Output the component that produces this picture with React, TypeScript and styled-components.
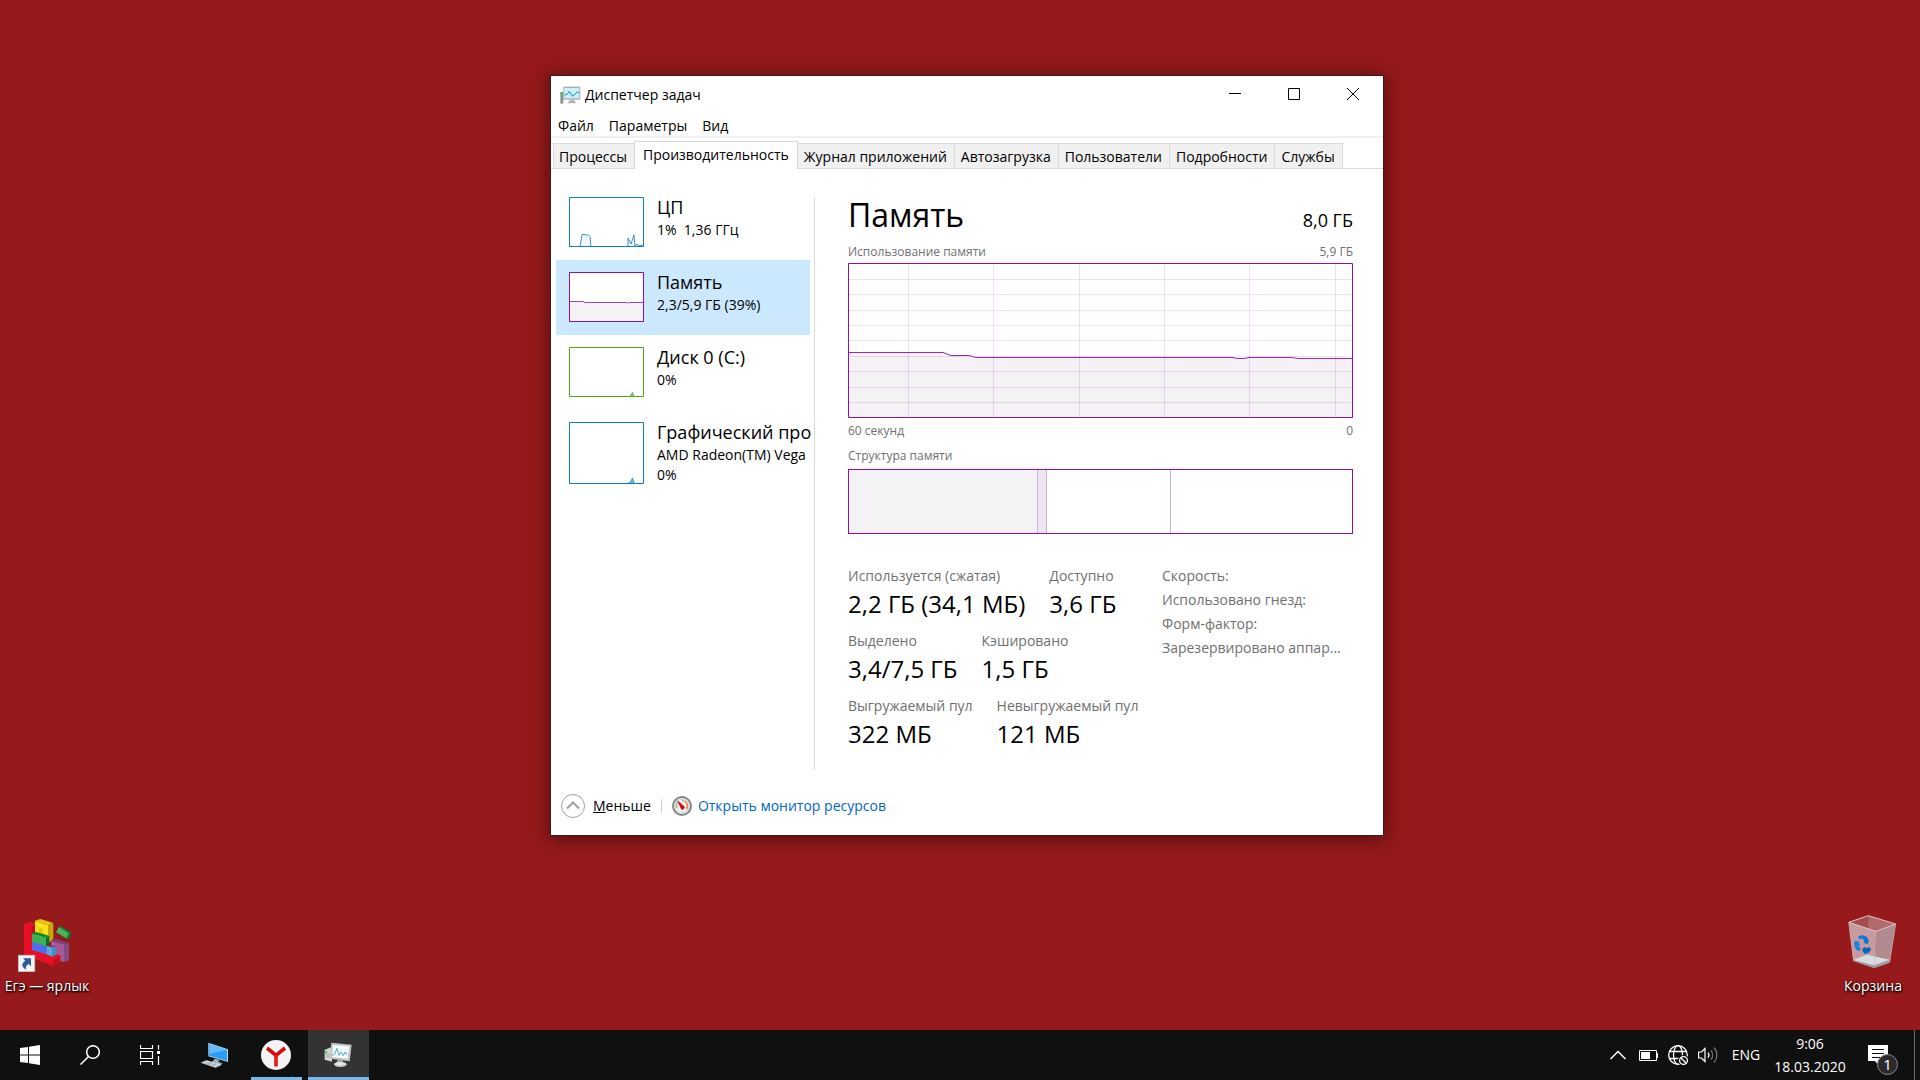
import React from "react";
import styled, { createGlobalStyle, css } from "styled-components";

const GlobalStyle = createGlobalStyle`
  * { box-sizing: border-box; }
  body { margin: 0; }
  body, button { font-family: "Open Sans", "Noto Sans", sans-serif; font-size: 14px; line-height: 20px; }
  button { margin: 0; padding: 0; border: 0; background: none; color: inherit; text-align: left; }
  h1, p, dl, dt, dd, ul { margin: 0; padding: 0; font-weight: 400; }
  svg { display: block; flex: none; }
`;

/* ---------- Desktop ---------- */

const Screen = styled.div`
  display: flex;
  flex-direction: column;
  min-height: 100vh;
  background: #96191b;
  color: #000;
`;

const Workspace = styled.main`
  position: relative;
  flex: 1;
  overflow: hidden;
`;

const Shortcut = styled.button<{ $side: "left" | "right" }>`
  position: absolute;
  bottom: 34px;
  ${(p) => p.$side}: 0;
  width: 94px;
  display: flex;
  flex-direction: column;
  align-items: center;
  gap: 4px;
  color: #fff;
  white-space: nowrap;
  text-shadow: 1px 1px 2px #000, 0 1px 2px #000;
`;

/* ---------- Window ---------- */

const Window = styled.section`
  position: absolute;
  left: 550px;
  top: 75px;
  width: 834px;
  background: #fff;
  border: 1px solid #3c1a1a;
  box-shadow: 0 2px 18px 2px rgba(0, 0, 0, 0.42);
`;

const TitleBar = styled.header`
  display: flex;
  height: 38px;
  align-items: center;
  padding-left: 9px;
  gap: 4px;
`;

const Title = styled.h1`
  flex: 1;
  font-size: 14px;
  line-height: 20px;
`;

const CaptionButtons = styled.div`
  display: flex;
  align-self: flex-start;
  padding-right: 1px;
`;

const CaptionButton = styled.button`
  width: 59px;
  height: 36px;
  display: grid;
  place-items: center;
`;

const MenuBar = styled.nav`
  display: flex;
  gap: 15px;
  padding: 2px 7px 0;
  height: 24px;
  border-bottom: 2px solid #f0f0f0;
`;

const TabStrip = styled.div`
  display: flex;
  align-items: flex-end;
  height: 31px;
  padding-left: 2px;
  border-bottom: 1px solid #d9d9d9;
`;

const Tab = styled.button<{ $active?: boolean }>`
  height: 25px;
  padding: 2px 7px 0 6px;
  border: 1px solid #d9d9d9;
  border-width: 1px 1px 0 0;
  background: #f0f0f0;
  white-space: nowrap;
  &:first-child { padding-left: 5px; border-left-width: 1px; }
  ${(p) =>
    p.$active &&
    css`
      height: 28px;
      margin: 0 0 -1px -1px;
      padding: 0 8px 2px;
      border-left-width: 1px;
      background: #fff;
    `}
`;

const Body = styled.div`
  display: grid;
  grid-template-columns: 263px 1px 1fr;
`;

const Sidebar = styled.div`
  padding: 16px 4px 0 5px;
  overflow: hidden;
`;

const Divider = styled.div`
  margin-top: 28px;
  background: #d9d9d9;
`;

const Resource = styled.button<{ $selected?: boolean }>`
  display: grid;
  grid-template-columns: 75px 1fr;
  column-gap: 13px;
  align-items: start;
  width: 100%;
  min-height: 75px;
  padding-left: 13px;
  background: ${(p) => (p.$selected ? "#cce8ff" : "transparent")};
  white-space: pre;
  & > svg { margin-top: 12px; }
`;

const ResourceText = styled.span`
  display: flex;
  flex-direction: column;
  padding-top: 9px;
  min-width: 0;
`;

const ResourceName = styled.span`
  font-size: 18px;
  line-height: 26px;
`;

const Details = styled.div`
  display: flex;
  flex-direction: column;
  padding: 22px 30px 20px 33px;
`;

const DetailsHeader = styled.div`
  display: flex;
  justify-content: space-between;
  align-items: baseline;
  font-size: 18px;
`;

const Heading = styled.h1`
  font-size: 32px;
  line-height: 48px;
`;

const Caption = styled.div`
  display: flex;
  justify-content: space-between;
  padding-top: 5px;
  font-size: 12px;
  color: #707070;
`;

const UsageFigure = styled.div`
  margin-top: -2px;
`;

const Chart = styled.svg`
  width: 100%;
  height: 155px;
  margin: 1px 0 -2px;
`;

const Composition = styled.div`
  display: flex;
  height: 65px;
  margin: 3px 0 32px;
  border: 1px solid #8b12ae;
`;

const Segment = styled.div<{ $share: number; $fill: string }>`
  flex: ${(p) => p.$share} 1 0;
  background: ${(p) => p.$fill};
  &:not(:last-child) { border-right: 1px solid #cfaed9; }
`;

const Facts = styled.div`
  display: flex;
  align-items: flex-start;
`;

const Stats = styled.div`
  display: flex;
  flex-direction: column;
  gap: 11px;
  width: 314px;
`;

const StatRow = styled.dl`
  display: flex;
  gap: 24px;
  white-space: nowrap;
`;

const StatLabel = styled.dt`
  color: #707070;
`;

const StatValue = styled.dd`
  padding-top: 2px;
  font-size: 24px;
  line-height: 32px;
`;

const Hardware = styled.ul`
  flex: 1;
  min-width: 0;
  list-style: none;
  margin-top: -2px;
  color: #707070;
  line-height: 24px;
  white-space: nowrap;
`;

const Footer = styled.footer`
  display: flex;
  align-items: center;
  height: 65px;
  padding: 6px 10px 0;
`;

const FewerButton = styled.button`
  display: flex;
  align-items: center;
  gap: 8px;
  padding-right: 10px;
`;

const FooterLink = styled.a`
  display: flex;
  align-items: center;
  gap: 6px;
  padding-left: 10px;
  color: #0066cc;
  text-decoration: none;
`;

const FooterRule = styled.span`
  width: 1px;
  height: 14px;
  background: #d0d0d0;
`;

/* ---------- Taskbar ---------- */

const Taskbar = styled.footer`
  display: flex;
  height: 50px;
  background: #101010;
  color: #fff;
`;

const SystemButton = styled.button`
  width: 60px;
  display: grid;
  place-items: center;
`;

const Apps = styled.div`
  display: flex;
  gap: 1px;
  flex: 1;
  padding-left: 4px;
`;

const AppButton = styled.button<{ $state?: "open" | "focused" }>`
  width: 61px;
  display: grid;
  grid-template-rows: 1fr 3px;
  place-items: center;
  padding-top: 3px;
  background: ${(p) => (p.$state === "focused" ? "#333" : "transparent")};
  & > svg { margin-right: 2px; }
  &::after {
    content: "";
    width: ${(p) => (p.$state === "focused" ? "61px" : "51px")};
    height: 3px;
    background: ${(p) => (p.$state ? "#76b9ed" : "transparent")};
  }
`;

const Tray = styled.div`
  display: flex;
  align-items: center;
`;

const TrayButton = styled.button<{ $width: number }>`
  width: ${(p) => p.$width}px;
  height: 50px;
  display: grid;
  place-items: center;
`;

const Clock = styled.button`
  width: 82px;
  text-align: center;
  line-height: 23px;
`;

const ShowDesktop = styled.button`
  width: 6px;
  height: 50px;
  border-left: 1px solid #6c6c6c;
`;

/* ---------- Drawings ---------- */

const ManagerIcon = () => (
  <svg width="21" height="18" viewBox="44 46 63 54">
    <path d="M45 64h9v35h-9z" fill="#8b9292" />
    <path d="M46 66h6v6h-6z" fill="#35d23a" />
    <path d="M54 48h51v39H54z" fill="#a9adad" />
    <path d="M57 52h45v31H57z" fill="#c8f0ff" />
    <path d="M58 73l6-1 8-10 10 15 14-13 6 3" fill="none" stroke="#1688bd" strokeWidth="3" />
    <path d="M74 87h12l7 11H66z" fill="#b7b7b7" />
  </svg>
);

const EgeIcon = () => (
  <svg width="59" height="55" viewBox="51 51 177 165">
    <path d="M69 72l23-6 22 5v80l64 18v17l-21 11-88-32z" fill="#e81123" />
    <path d="M92 78l22-7v30H92zM157 180l21-10v16l-21 11z" fill="#c00f20" />
    <path d="M102 62l39 14v54l-39-20z" fill="#fbe11e" />
    <path d="M102 62l16-5 39 12-16 7z" fill="#e6c60c" />
    <path d="M141 76l16-7v48l-16 13z" fill="#c7a80a" />
    <path d="M113 82l12 4v22l-12-4z" fill="#e3c70c" />
    <path d="M150 122l39 11v53l-11-3v-16l-13-4v-22l-15-4z" fill="#a55a98" />
    <path d="M150 122l15-5 39 12-15 5z" fill="#7d4079" />
    <path d="M189 134l15-5v52l-15 5z" fill="#844a86" />
    <path d="M93 125l44 13v25l-44-13z" fill="#4f6df0" />
    <path d="M137 138l9 3 19-1v24l-12 6-16-7z" fill="#3f8dc6" />
    <path d="M137 138l16 4v27l-16-6z" fill="#59a9dc" />
    <path d="M93 101l42 12v25l-42-12z" fill="#3fae55" />
    <path d="M93 101l9-6 43 12-10 6z" fill="#0b8a36" />
    <path d="M135 113l10-6v25l-10 6z" fill="#057029" />
    <path d="M178 77l33 22-9 21-37-23z" fill="#0c7d34" />
    <path d="M173 81l30 19-7 15-30-18z" fill="#4bb35f" />
    <path d="M52 166h49v49H52z" fill="#f4f4f4" stroke="#c3c3c3" strokeWidth="3" />
    <path d="M66 175h24v24l-7-7c-8 5-10 10-7 17-15-8-16-19-3-27z" fill="#2d5c9e" />
  </svg>
);

const BinIcon = () => (
  <svg width="50" height="57" viewBox="774 45 150 171">
    <path d="M776 67l59-20 82 25-59 22z" fill="#b26a6d" />
    <path d="M776 67l59-20v38l-40 14z" fill="#a34d50" />
    <path d="M776 67l82 27-5 110-63-22z" fill="#c69a9e" />
    <path d="M858 94l59-22-18 116-46 16z" fill="#b08a8f" />
    <path d="M790 180l40-16 70 15-47 17z" fill="#d6dde0" />
    <path d="M790 180l63 17 46-18v9l-46 16-62-20z" fill="#9ba0a3" />
    <path d="M776 67l59-20 82 25-59 22z" fill="none" stroke="#e3c3c6" strokeWidth="3" />
    <path d="M776 67l15 116M917 72l-18 114M857 94l-4 100" fill="none" stroke="#d5b3b6" strokeWidth="2" />
    <path d="M804 110l12-5 14 5 7 12-4 10-13-4 3-6-8-8-5 5z" fill="#0a78d4" />
    <path d="M793 122l13 2 4 10-5 3 7 7-2 9-10-2-7-13z" fill="#1487e0" />
    <path d="M816 150l7-10 3 4 14-2 3 8-9 10-11 1z" fill="#0667bf" />
  </svg>
);

const GaugeIcon = () => (
  <svg width="20" height="20" viewBox="0 0 20 20">
    <circle cx="10" cy="10" r="9" fill="#f3f1ee" stroke="#7f8788" strokeWidth="2" />
    <circle cx="10" cy="10" r="7" fill="none" stroke="#cfcfca" />
    <path d="M5 12a5.500 5.500 0 0 1 1-6M10 4.500a5.500 5.500 0 0 1 3 1" fill="none" stroke="#b8b8b0" strokeWidth="1.500" />
    <path d="M13 5.500a5.500 5.500 0 0 1 1.500 7.500" fill="none" stroke="#f07a3a" strokeWidth="1.500" />
    <path d="M5 4l8 7-2 3-2-1z" fill="#cf0f16" />
  </svg>
);

const ComputerIcon = () => (
  <svg width="28" height="26" viewBox="600 427 84 78">
    <path d="M625 429l59 20v38l-59-17z" fill="#b8dcf0" />
    <path d="M627 432l54 19v33l-54-16z" fill="#2f9df4" />
    <path d="M627 432l54 19-54 12z" fill="#62bbff" />
    <path d="M645 477l14 4-4 6 14 4-16 4-18-7z" fill="#9fb0ba" />
    <path d="M602 489l17-7 47 13-19 9z" fill="#dfe8ed" />
    <path d="M608 489l43 12M614 486l44 12M618 496l17-9M632 500l16-9" stroke="#8a99a3" strokeWidth="2" />
  </svg>
);

const YandexIcon = () => (
  <svg width="30" height="30" viewBox="0 0 30 30">
    <circle cx="15" cy="15" r="15" fill="#f4f4f4" />
    <path d="M6 8l9 7.500L24 8" fill="none" stroke="#d10f12" strokeWidth="3.600" />
    <path d="M15 15v11.500" stroke="#e81a1c" strokeWidth="3.600" />
  </svg>
);

const ManagerLargeIcon = () => (
  <svg width="28" height="26" viewBox="970 429 84 78">
    <path d="M972 452l22-8v44l-22-6z" fill="#d6d6d4" />
    <path d="M972 458l8-3v6l-8 3z" fill="#49c92b" />
    <path d="M976 467h16M976 474h16" stroke="#8d8d8d" strokeWidth="2" />
    <path d="M992 431l61 6-6 50-59-8z" fill="#c3c5c5" />
    <path d="M997 438l49 4-5 37-47-5z" fill="#f2fbff" />
    <path d="M994 469l8-3 7-18 6 21 6-10 7 11 5-11 4 8 4-3" fill="none" stroke="#3f9cc0" strokeWidth="2.500" />
    <path d="M1010 481l16 2 1 8h-18z" fill="#a5a5a5" />
    <ellipse cx="1019" cy="496" rx="19" ry="8" fill="#cfcfcf" />
    <ellipse cx="1017" cy="494" rx="12" ry="4" fill="#e6e6e6" />
  </svg>
);

const StartIcon = () => (
  <svg width="20" height="20" viewBox="0 0 20 20" fill="#fff">
    <path d="M0 3l8-1v7.500H0zM9 1.800L20 0v9.500H9zM0 10.500h8V18l-8-1zM9 10.500h11V20L9 18.200z" />
  </svg>
);

const SearchIcon = () => (
  <svg width="20" height="20" viewBox="0 0 20 20" fill="none" stroke="#fff" strokeWidth="1.500">
    <circle cx="13" cy="7" r="6.300" />
    <path d="M8.500 11.500L.5 19.500" />
  </svg>
);

const TaskViewIcon = () => (
  <svg width="20" height="20" viewBox="0 0 20 20" fill="none" stroke="#fff">
    <path d="M.5 0v3.500h12V0M.5 6.500h12v7H.5zM.5 20v-3.500h12V20M18.500 0v4.500M18.500 11v9" strokeWidth="1.200" />
    <path d="M17 6h3v3h-3z" fill="#fff" stroke="none" />
  </svg>
);

const ChevronIcon = () => (
  <svg width="16" height="10" viewBox="0 0 16 10" fill="none" stroke="#fff" strokeWidth="1.500">
    <path d="M.5 9L8 1.500 15.500 9" />
  </svg>
);

const BatteryIcon = () => (
  <svg width="19" height="11" viewBox="0 0 19 11">
    <path d="M.5.500h17v10H.5z" fill="none" stroke="#fff" />
    <path d="M2 2h9v7H2zM18 3h1v5h-1z" fill="#fff" />
  </svg>
);

const GlobeIcon = () => (
  <svg width="20" height="20" viewBox="0 0 20 20" fill="none" stroke="#fff" strokeWidth="1.300">
    <circle cx="10" cy="10" r="9.300" />
    <ellipse cx="10" cy="10" rx="4.500" ry="9.300" />
    <path d="M1.500 6.500h17M1.500 13.500h17" />
    <circle cx="15.500" cy="15.500" r="5.500" fill="#101010" stroke="none" />
    <circle cx="15.500" cy="15.500" r="3.900" />
    <path d="M12.800 12.800l5.400 5.400" />
  </svg>
);

const VolumeIcon = () => (
  <svg width="20" height="18" viewBox="0 0 20 18" fill="none" stroke="#fff" strokeWidth="1.200">
    <path d="M.6 6h2.900L7 2.500v13L3.500 12H.6z" />
    <path d="M10 6.500a4 4 0 0 1 0 5" />
    <path d="M13 4.500a7 7 0 0 1 0 9M16 1.500a11 11 0 0 1 0 15" stroke="#777" />
  </svg>
);

const NoticeIcon = () => (
  <svg width="30" height="40" viewBox="0 -10 30 40">
    <path d="M0 0h20v16h-9v5l-4-5H0z" fill="#fff" />
    <path d="M4 4.500h12M4 8.500h12M4 12.500h8" stroke="#101010" strokeWidth="1.200" />
    <circle cx="19.500" cy="19.500" r="10" fill="#2b2b2b" stroke="#8a8a8a" />
    <text x="19.500" y="25" textAnchor="middle" fill="#fff" fontSize="15">1</text>
  </svg>
);

type ThumbProps = { color: string; height: number; line: string; fill: string };

const Thumb = ({ color, height, line, fill }: ThumbProps) => (
  <svg width="75" height={height} viewBox={`0 0 75 ${height}`}>
    <path d={`M.5.500h74v${height - 1}H.5z`} fill="#fff" />
    <path d={line} fill={fill} stroke={color} strokeOpacity="0.800" />
    <path d={`M.5.500h74v${height - 1}H.5z`} fill="none" stroke={color} />
  </svg>
);

/* ---------- Data ---------- */

const resources = [
  {
    name: "ЦП",
    lines: ["1%  1,36 ГГц"],
    thumb: { color: "#117dbb", height: 50, fill: "#f1f6fa", line: "M0 49.500l11 0 2-12h3l2 1 1-1 2 2 1 10h37V41l3 6 3-9 1 11 2-2 2 2 3-1 5 1" },
  },
  {
    name: "Память",
    lines: ["2,3/5,9 ГБ (39%)"],
    selected: true,
    thumb: { color: "#8b12ae", height: 50, fill: "#f4f2f4", line: "M.5 49.500v-20h14l1 1h42l1 1 1-1h15v19z" },
  },
  {
    name: "Диск 0 (C:)",
    lines: ["0%"],
    thumb: { color: "#4da60c", height: 50, fill: "#a6d286", line: "M61 49.500l2.500-4 1.500 4" },
  },
  {
    name: "Графический про",
    lines: ["AMD Radeon(TM) Vega", "0%"],
    thumb: { color: "#117dbb", height: 62, fill: "#88bedd", line: "M59 61h2l2.500-5 1.500 5" },
  },
];

const tabs = ["Процессы", "Производительность", "Журнал приложений", "Автозагрузка", "Пользователи", "Подробности", "Службы"];

const stats = [
  [["Используется (сжатая)", "2,2 ГБ (34,1 МБ)"], ["Доступно", "3,6 ГБ"]],
  [["Выделено", "3,4/7,5 ГБ"], ["Кэшировано", "1,5 ГБ"]],
  [["Выгружаемый пул", "322 МБ"], ["Невыгружаемый пул", "121 МБ"]],
];

const hardware = ["Скорость:", "Использовано гнезд:", "Форм-фактор:", "Зарезервировано аппар..."];

const columns = [60, 145, 231, 316, 401, 487];
const rows = [16, 31, 47, 62, 77, 93, 108, 124, 139];
const usage = "M0 89.500H95L103 92.500H121L128 94.500H384L390 95.500H396L401 94.500H443L451 95.500H505";

const UsageChart = () => (
  <Chart viewBox="0 0 505 155" preserveAspectRatio="none">
    <path d={`${usage}V155H0Z`} fill="#f4f2f4" />
    <g stroke="#8b12ae" strokeOpacity="0.140">
      {columns.map((x) => <path key={x} d={`M${x + 0.5} 1v153`} />)}
      {rows.map((y) => <path key={y} d={`M1 ${y + 0.5}h502`} />)}
    </g>
    <path d={usage} fill="none" stroke="#9528b4" />
    <path d="M.5.500h504v154H.5z" fill="none" stroke="#8b12ae" />
  </Chart>
);

export default function App() {
  return (
    <Screen>
      <GlobalStyle />
      <Workspace>
        <Shortcut $side="left"><EgeIcon />Егэ — ярлык</Shortcut>
        <Shortcut $side="right"><BinIcon />Корзина</Shortcut>

        <Window aria-label="Диспетчер задач">
          <TitleBar>
            <ManagerIcon />
            <Title>Диспетчер задач</Title>
            <CaptionButtons>
              <CaptionButton aria-label="Свернуть">
                <svg width="12" height="12"><path d="M0 5.500h12" stroke="#000" /></svg>
              </CaptionButton>
              <CaptionButton aria-label="Развернуть">
                <svg width="12" height="12"><path d="M.5.500h11v11H.5z" fill="none" stroke="#000" /></svg>
              </CaptionButton>
              <CaptionButton aria-label="Закрыть">
                <svg width="12" height="12"><path d="M0 0l12 12M12 0L0 12" stroke="#000" /></svg>
              </CaptionButton>
            </CaptionButtons>
          </TitleBar>
          <MenuBar>
            <button>Файл</button>
            <button>Параметры</button>
            <button>Вид</button>
          </MenuBar>
          <TabStrip role="tablist">
            {tabs.map((name, i) => (
              <Tab key={name} role="tab" aria-selected={i === 1} $active={i === 1}>{name}</Tab>
            ))}
          </TabStrip>

          <Body>
            <Sidebar>
              {resources.map((r) => (
                <Resource key={r.name} $selected={r.selected}>
                  <Thumb {...r.thumb} />
                  <ResourceText>
                    <ResourceName>{r.name}</ResourceName>
                    {r.lines.map((line) => <span key={line}>{line}</span>)}
                  </ResourceText>
                </Resource>
              ))}
            </Sidebar>
            <Divider />
            <Details>
              <DetailsHeader><Heading>Память</Heading><span>8,0 ГБ</span></DetailsHeader>
              <UsageFigure>
                <Caption><span>Использование памяти</span><span>5,9 ГБ</span></Caption>
                <UsageChart />
                <Caption><span>60 секунд</span><span>0</span></Caption>
              </UsageFigure>
              <Caption>Структура памяти</Caption>
              <Composition>
                <Segment $share={190} $fill="#f4f2f4" />
                <Segment $share={8} $fill="#eee5f2" />
                <Segment $share={124} $fill="#fff" />
                <Segment $share={182} $fill="#fff" />
              </Composition>
              <Facts>
                <Stats>
                  {stats.map((row) => (
                    <StatRow key={row[0][0]}>
                      {row.map(([label, value]) => (
                        <div key={label}>
                          <StatLabel>{label}</StatLabel>
                          <StatValue>{value}</StatValue>
                        </div>
                      ))}
                    </StatRow>
                  ))}
                </Stats>
                <Hardware>
                  {hardware.map((item) => <li key={item}>{item}</li>)}
                </Hardware>
              </Facts>
            </Details>
          </Body>

          <Footer>
            <FewerButton>
              <svg width="24" height="24" viewBox="0 0 24 24" fill="none" stroke="#a0a0a0">
                <circle cx="12" cy="12" r="11.500" />
                <path d="M6 14.500L12 8.500l6 6" strokeWidth="2" />
              </svg>
              <span><u>М</u>еньше</span>
            </FewerButton>
            <FooterRule />
            <FooterLink href="#resmon"><GaugeIcon />Открыть монитор ресурсов</FooterLink>
          </Footer>
        </Window>
      </Workspace>

      <Taskbar>
        <SystemButton aria-label="Пуск"><StartIcon /></SystemButton>
        <SystemButton aria-label="Поиск"><SearchIcon /></SystemButton>
        <SystemButton aria-label="Представление задач"><TaskViewIcon /></SystemButton>
        <Apps>
          <AppButton aria-label="Компьютер"><ComputerIcon /></AppButton>
          <AppButton aria-label="Яндекс" $state="open"><YandexIcon /></AppButton>
          <AppButton aria-label="Диспетчер задач" $state="focused"><ManagerLargeIcon /></AppButton>
        </Apps>
        <Tray>
          <TrayButton $width={30} aria-label="Скрытые значки"><ChevronIcon /></TrayButton>
          <TrayButton $width={30} aria-label="Батарея"><BatteryIcon /></TrayButton>
          <TrayButton $width={30} aria-label="Сеть"><GlobeIcon /></TrayButton>
          <TrayButton $width={30} aria-label="Громкость"><VolumeIcon /></TrayButton>
          <TrayButton $width={46}>ENG</TrayButton>
          <Clock>9:06<br />18.03.2020</Clock>
          <TrayButton $width={63} aria-label="Уведомления"><NoticeIcon /></TrayButton>
          <ShowDesktop aria-label="Свернуть все окна" />
        </Tray>
      </Taskbar>
    </Screen>
  );
}
